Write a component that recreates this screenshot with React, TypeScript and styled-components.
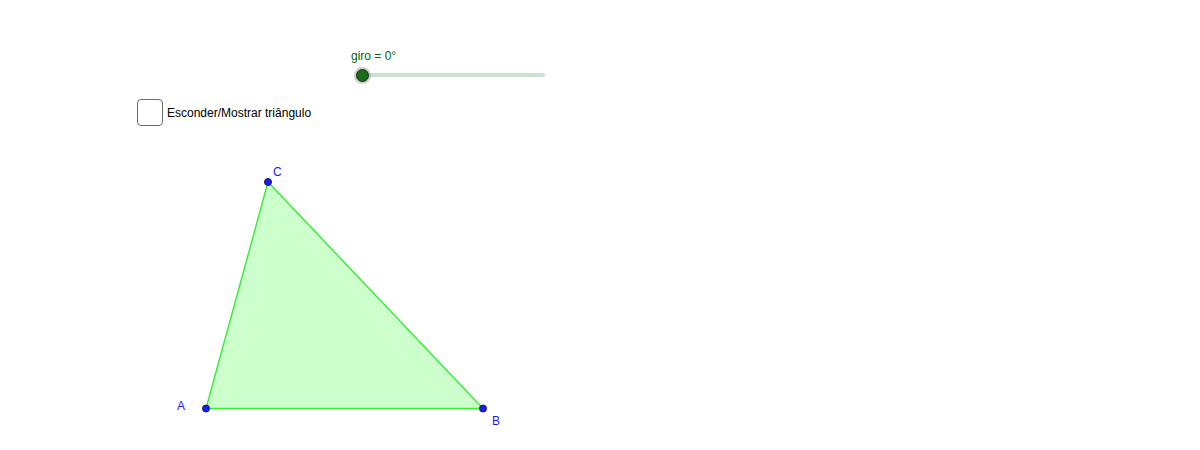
import styled, { createGlobalStyle } from "styled-components";

const GlobalStyle = createGlobalStyle`
  html, body {
    margin: 0;
    padding: 0;
    background: #ffffff;
  }
  body {
    font-family: "Liberation Sans", Arial, sans-serif;
  }
`;

const Stage = styled.div`
  position: relative;
  width: 1200px;
  height: 450px;
  overflow: hidden;
  background: #ffffff;
`;

const Drawing = styled.svg`
  position: absolute;
  left: 0;
  top: 0;
`;

const Controls = styled.div`
  position: relative;
  display: flex;
  flex-direction: column;
  padding-top: 49px;
`;

const SliderBlock = styled.div`
  margin-left: 351px;
  display: flex;
  flex-direction: column;
`;

const SliderLabel = styled.span`
  font-size: 12px;
  line-height: 14px;
  color: #006400;
`;

const TrackRow = styled.div`
  position: relative;
  margin-top: 4px;
  margin-left: 11px;
  width: 183px;
  height: 16px;
  display: flex;
  align-items: center;
`;

const Track = styled.div`
  width: 100%;
  height: 4px;
  border-radius: 2px;
  background: #cddfcd;
`;

const Knob = styled.div<{ $pos: number }>`
  position: absolute;
  top: 2px;
  left: ${(p) => p.$pos - 6}px;
  width: 11px;
  height: 11px;
  border-radius: 50%;
  background: #1a6b1a;
  border: 1px solid #1c2a1c;
  box-shadow: 0 0 0 2px rgba(160, 170, 160, 0.55);
`;

const CheckRow = styled.label`
  margin-left: 137px;
  margin-top: 16px;
  display: flex;
  align-items: center;
  gap: 4px;
`;

const Box = styled.span`
  box-sizing: border-box;
  width: 26px;
  height: 27px;
  border: 1px solid #6b6b6b;
  border-radius: 4px;
  background: #ffffff;
`;

const CheckText = styled.span`
  font-size: 12px;
  line-height: 14px;
  color: #000000;
`;

const points = {
  A: { x: 206, y: 408.5, lx: 177, ly: 410 },
  B: { x: 483, y: 408.5, lx: 492, ly: 425 },
  C: { x: 268, y: 182, lx: 273, ly: 176 },
};

const App = () => {
  const { A, B, C } = points;
  return (
    <>
      <GlobalStyle />
      <Stage>
        <Drawing width={1200} height={450} viewBox="0 0 1200 450">
          <polygon
            points={`${A.x},${A.y} ${B.x},${B.y} ${C.x},${C.y}`}
            fill="#ccffcc"
            stroke="#33ee33"
            strokeWidth={1.4}
          />
          {Object.entries(points).map(([name, p]) => (
            <g key={name}>
              <circle
                cx={p.x}
                cy={p.y}
                r={3.5}
                fill="#1a1aff"
                stroke="#1a1a40"
                strokeWidth={1}
              />
              <text
                x={p.lx}
                y={p.ly}
                fill="#1a1ae6"
                fontSize={12}
                fontFamily='"Liberation Sans", Arial, sans-serif'
              >
                {name}
              </text>
            </g>
          ))}
        </Drawing>
        <Controls>
          <SliderBlock>
            <SliderLabel>giro = 0°</SliderLabel>
            <TrackRow>
              <Track />
              <Knob $pos={0} />
            </TrackRow>
          </SliderBlock>
          <CheckRow>
            <Box />
            <CheckText>Esconder/Mostrar triângulo</CheckText>
          </CheckRow>
        </Controls>
      </Stage>
    </>
  );
};

export default App;
